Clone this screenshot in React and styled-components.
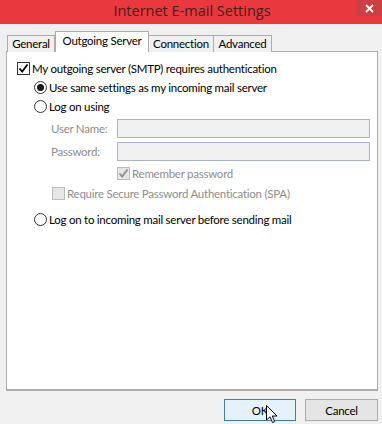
import React from "react";
import styled, { createGlobalStyle } from "styled-components";

const GlobalStyle = createGlobalStyle`
  html, body {
    margin: 0;
    padding: 0;
    background: #f0f0f0;
  }
  body {
    font-family: Lato, "Open Sans", sans-serif;
    font-size: 11.5px;
    letter-spacing: -0.25px;
    color: #000;
  }
`;

const Window = styled.div`
  width: 382px;
  height: 424px;
  display: flex;
  flex-direction: column;
  background: #f0f0f0;
  overflow: hidden;
`;

const TitleBar = styled.div`
  height: 24px;
  background: #e9383e;
  display: flex;
  align-items: center;
  justify-content: center;
  position: relative;
`;

const Title = styled.div`
  font-family: "Open Sans", sans-serif;
  font-size: 14.5px;
  letter-spacing: 0;
  color: #4a1c1c;
  margin: 0 0 3px 2px;
`;

const CloseButton = styled.div`
  position: absolute;
  top: 0;
  right: 0;
  width: 26px;
  height: 16px;
  background: #cc3f42;
  display: flex;
  align-items: center;
  justify-content: center;
`;

const Body = styled.div`
  flex: 1;
  display: flex;
  flex-direction: column;
  padding: 8px 4px 0 6px;
`;

const Tabs = styled.div`
  display: flex;
  align-items: flex-end;
  height: 20px;
  padding-left: 1px;
  margin-bottom: -1px;
  position: relative;
  z-index: 1;
`;

const Tab = styled.div`
  width: ${(p) => p.$w}px;
  height: ${(p) => (p.$active ? "21px" : "17px")};
  box-sizing: border-box;
  border: 1px solid #acacac;
  border-bottom: none;
  border-left: ${(p) => (p.$first || p.$active ? "1px solid #acacac" : "none")};
  background: ${(p) => (p.$active ? "#fff" : "#f0f0f0")};
  display: flex;
  justify-content: center;
  align-items: center;
  padding-bottom: ${(p) => (p.$active ? "3px" : "2px")};
  white-space: nowrap;
`;

const Panel = styled.div`
  height: 340px;
  background: #fff;
  border: 1px solid #acacac;
  border-bottom: 2px solid #acacac;
  box-sizing: border-box;
  padding: 10px 0 0 10px;
  display: flex;
  flex-direction: column;
`;

const Row = styled.div`
  display: flex;
  align-items: center;
  height: 13px;
  margin-left: ${(p) => p.$indent || 0}px;
  margin-top: ${(p) => p.$top || 0}px;
  color: ${(p) => (p.$disabled ? "#8d8d8d" : "#000")};
  white-space: nowrap;
`;

const Box = styled.span`
  width: 13px;
  height: 13px;
  box-sizing: border-box;
  border: 1px solid ${(p) => (p.$disabled ? "#bcbcbc" : "#333")};
  background: ${(p) => (p.$disabled ? "#e6e6e6" : "#fff")};
  display: inline-flex;
  align-items: center;
  justify-content: center;
  margin-right: 2px;
  flex: none;
`;

const Radio = styled.span`
  width: 13px;
  height: 13px;
  box-sizing: border-box;
  border: 1px solid #333;
  border-radius: 50%;
  background: #fff;
  display: inline-flex;
  align-items: center;
  justify-content: center;
  margin-right: 2px;
  flex: none;
`;

const Dot = styled.span`
  width: 7px;
  height: 7px;
  border-radius: 50%;
  background: #1a1a1a;
`;

const FieldRow = styled.div`
  display: flex;
  align-items: center;
  margin-top: ${(p) => p.$top || 0}px;
  margin-left: 34px;
`;

const FieldLabel = styled.div`
  width: 66px;
  color: #8d8d8d;
`;

const Input = styled.div`
  width: 253px;
  height: 19px;
  box-sizing: border-box;
  border: 1px solid #abb5c8;
  background: #f0f0f0;
`;

const Footer = styled.div`
  display: flex;
  justify-content: flex-end;
  gap: 9px;
  padding-top: 8px;
`;

const Button = styled.div`
  width: ${(p) => p.$w}px;
  height: 22px;
  box-sizing: border-box;
  border: 1px solid ${(p) => (p.$default ? "#3c7fb1" : "#acacac")};
  background: ${(p) => (p.$default ? "#e5f1fb" : "#e5e5e5")};
  display: flex;
  align-items: center;
  justify-content: center;
  position: relative;
`;

const Cursor = styled.svg`
  position: absolute;
  left: 41px;
  top: 5px;
`;

const Check = ({ color = "#000" }) => (
  <svg width="11" height="11" viewBox="0 0 11 11">
    <path d="M1.5 5.5 L4.2 8.5 L9.5 1.5" fill="none" stroke={color} strokeWidth="1.8" />
  </svg>
);

export default function App() {
  return (
    <>
      <GlobalStyle />
      <Window>
        <TitleBar>
          <Title>Internet E-mail Settings</Title>
          <CloseButton>
            <svg width="9" height="9" viewBox="0 0 9 9">
              <path d="M1 1 L8 8 M8 1 L1 8" stroke="#fff" strokeWidth="1.8" />
            </svg>
          </CloseButton>
        </TitleBar>
        <Body>
          <Tabs>
            <Tab $first $w={48}>General</Tab>
            <Tab $active $w={94}>Outgoing Server</Tab>
            <Tab $w={65}>Connection</Tab>
            <Tab $w={58}>Advanced</Tab>
          </Tabs>
          <Panel>
            <Row>
              <Box>
                <Check />
              </Box>
              My outgoing server (SMTP) requires authentication
            </Row>
            <Row $indent={17} $top={6}>
              <Radio>
                <Dot />
              </Radio>
              Use same settings as my incoming mail server
            </Row>
            <Row $indent={17} $top={6}>
              <Radio />
              Log on using
            </Row>
            <FieldRow $top={6}>
              <FieldLabel>User Name:</FieldLabel>
              <Input />
            </FieldRow>
            <FieldRow $top={4}>
              <FieldLabel>Password:</FieldLabel>
              <Input />
            </FieldRow>
            <Row $indent={100} $top={6} $disabled>
              <Box $disabled>
                <Check color="#8d8d8d" />
              </Box>
              Remember password
            </Row>
            <Row $indent={35} $top={7} $disabled>
              <Box $disabled />
              Require Secure Password Authentication (SPA)
            </Row>
            <Row $indent={17} $top={13}>
              <Radio />
              Log on to incoming mail server before sending mail
            </Row>
          </Panel>
          <Footer>
            <Button $default $w={72}>
              OK
              <Cursor width="13" height="19" viewBox="0 0 13 19">
                <path
                  d="M0.5 0.5 L0.5 15 L4 11.8 L6.5 17.5 L8.7 16.6 L6.3 11 L11 11 Z"
                  fill="#fff"
                  stroke="#000"
                  strokeWidth="1"
                />
              </Cursor>
            </Button>
            <Button $w={73}>Cancel</Button>
          </Footer>
        </Body>
      </Window>
    </>
  );
}
